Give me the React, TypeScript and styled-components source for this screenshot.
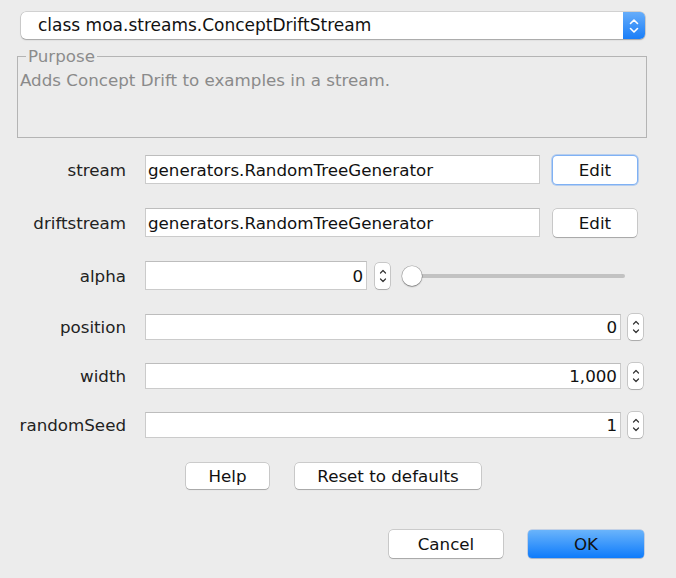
import React from "react";
import styled, { createGlobalStyle } from "styled-components";

const Global = createGlobalStyle`
  html, body { margin: 0; padding: 0; background: #ececec; }
  body { font-family: "DejaVu Sans", "Liberation Sans", sans-serif; }
  * { box-sizing: border-box; }
`;

const Page = styled.div`
  width: 676px;
  height: 578px;
  padding-top: 12px;
  display: flex;
  flex-direction: column;
  font-size: 16.7px;
  color: #1a1a1a;
`;

const Combo = styled.div`
  margin: 0 31px 0 21px;
  height: 27px;
  display: flex;
  background: #fff;
  border-radius: 5px;
  box-shadow: 0 0 0 0.5px rgba(0, 0, 0, 0.22), 0 1px 1.5px rgba(0, 0, 0, 0.22);
`;

const ComboText = styled.div`
  flex: 1;
  padding-left: 17px;
  font-size: 17px;
  line-height: 27px;
  color: #111;
`;

const ComboArrows = styled.div`
  width: 22px;
  border-radius: 0 5px 5px 0;
  background: linear-gradient(#66adfa, #1a7ef8);
  display: flex;
  align-items: center;
  justify-content: center;
`;

const Panel = styled.fieldset`
  margin: 8px 29px 0 17px;
  padding: 0 0 0 2px;
  border: 1px solid #b4b4b4;
  min-inline-size: 0;
`;

const Legend = styled.legend`
  margin-left: 6px;
  padding: 0 2px;
  line-height: 19px;
  color: #8c8c8c;
`;

const Description = styled.div`
  margin-top: 5px;
  height: 66px;
  line-height: 19px;
  color: #8a8a8a;
`;

const Form = styled.div`
  margin-top: 17px;
  display: flex;
  flex-direction: column;
`;

const Row = styled.div<{ $h: number; $mt: number }>`
  display: flex;
  align-items: center;
  height: ${(p) => p.$h}px;
  margin-top: ${(p) => p.$mt}px;
`;

const Label = styled.div`
  width: 126px;
  margin-right: 19px;
  text-align: right;
  color: #222;
`;

const Field = styled.div<{ $w: number; $num?: boolean }>`
  width: ${(p) => p.$w}px;
  height: 100%;
  background: #fff;
  border: 1px solid #cbcbcb;
  border-top-color: #bdbdbd;
  display: flex;
  align-items: center;
  justify-content: ${(p) => (p.$num ? "flex-end" : "flex-start")};
  padding: 0 3px 0 2px;
  color: #111;
  white-space: nowrap;
`;

const Button = styled.button<{ $w: number; $h?: number; $focus?: boolean; $primary?: boolean }>`
  width: ${(p) => p.$w}px;
  height: ${(p) => p.$h ?? 26}px;
  font-family: inherit;
  font-size: 16.7px;
  color: #111;
  padding: 0;
  border: none;
  border-radius: 4px;
  background: ${(p) => (p.$primary ? "linear-gradient(#6ab4fb, #0e7bfb)" : "#fff")};
  box-shadow: ${(p) =>
    p.$focus
      ? "0 0 0 1px #7fb1f4, 0 0 0 2px rgba(130,175,240,0.5)"
      : p.$primary
      ? "0 0 0 0.5px rgba(0,80,200,0.35), 0 1px 1px rgba(0,0,0,0.15)"
      : "0 0 0 0.5px rgba(0,0,0,0.28), 0 1px 1px rgba(0,0,0,0.18)"};
`;

const EditButton = styled(Button)`
  margin-left: 13px;
`;

const Spinner = styled.div<{ $ml: number }>`
  margin-left: ${(p) => p.$ml}px;
  width: 15px;
  height: 26px;
  background: #fff;
  border-radius: 4px;
  box-shadow: 0 0 0 0.5px rgba(0, 0, 0, 0.3), 0 1px 1px rgba(0, 0, 0, 0.15);
  display: flex;
  align-items: center;
  justify-content: center;
`;

const Slider = styled.div`
  margin-left: 12px;
  width: 223px;
  height: 22px;
  position: relative;
  display: flex;
  align-items: center;
`;

const Track = styled.div`
  flex: 1;
  height: 4px;
  margin-left: 10px;
  border-radius: 2px;
  background: #c2c2c2;
`;

const Thumb = styled.div`
  position: absolute;
  left: 0;
  top: 1px;
  width: 20px;
  height: 20px;
  border-radius: 50%;
  background: #fff;
  box-shadow: 0 0 0 0.5px rgba(0, 0, 0, 0.3), 0 1px 1.5px rgba(0, 0, 0, 0.3);
`;

const HelpBar = styled.div`
  margin-top: 25px;
  padding: 0 26px 0 17px;
  display: flex;
  justify-content: center;
  gap: 26px;
`;

const DialogBar = styled.div`
  margin-top: 41px;
  padding-right: 32px;
  display: flex;
  justify-content: flex-end;
  gap: 25px;
`;

const ComboChevrons = () => (
  <svg width="10" height="16" viewBox="0 0 10 16">
    <path d="M1.5 5.5 L5 2 L8.5 5.5" fill="none" stroke="#fff" strokeWidth="1.6" strokeLinecap="round" strokeLinejoin="round" />
    <path d="M1.5 10.5 L5 14 L8.5 10.5" fill="none" stroke="#fff" strokeWidth="1.6" strokeLinecap="round" strokeLinejoin="round" />
  </svg>
);

const SpinChevrons = () => (
  <svg width="8" height="16" viewBox="0 0 8 16">
    <path d="M1.5 5 L4 2.5 L6.5 5" fill="none" stroke="#333" strokeWidth="1.2" strokeLinecap="round" strokeLinejoin="round" />
    <path d="M1.5 11 L4 13.5 L6.5 11" fill="none" stroke="#333" strokeWidth="1.2" strokeLinecap="round" strokeLinejoin="round" />
  </svg>
);

export default function App() {
  return (
    <>
      <Global />
      <Page>
        <Combo>
          <ComboText>class moa.streams.ConceptDriftStream</ComboText>
          <ComboArrows>
            <ComboChevrons />
          </ComboArrows>
        </Combo>
        <Panel>
          <Legend>Purpose</Legend>
          <Description>Adds Concept Drift to examples in a stream.</Description>
        </Panel>
        <Form>
          <Row $h={29} $mt={0}>
            <Label>stream</Label>
            <Field $w={395}>generators.RandomTreeGenerator</Field>
            <EditButton $w={84} $h={28} $focus>Edit</EditButton>
          </Row>
          <Row $h={29} $mt={24}>
            <Label>driftstream</Label>
            <Field $w={395}>generators.RandomTreeGenerator</Field>
            <EditButton $w={84} $h={28}>Edit</EditButton>
          </Row>
          <Row $h={29} $mt={24}>
            <Label>alpha</Label>
            <Field $w={222} $num>0</Field>
            <Spinner $ml={8}>
              <SpinChevrons />
            </Spinner>
            <Slider>
              <Track />
              <Thumb />
            </Slider>
          </Row>
          <Row $h={26} $mt={24}>
            <Label>position</Label>
            <Field $w={476} $num>0</Field>
            <Spinner $ml={7}>
              <SpinChevrons />
            </Spinner>
          </Row>
          <Row $h={26} $mt={23}>
            <Label>width</Label>
            <Field $w={476} $num>1,000</Field>
            <Spinner $ml={7}>
              <SpinChevrons />
            </Spinner>
          </Row>
          <Row $h={26} $mt={23}>
            <Label>randomSeed</Label>
            <Field $w={476} $num>1</Field>
            <Spinner $ml={7}>
              <SpinChevrons />
            </Spinner>
          </Row>
        </Form>
        <HelpBar>
          <Button $w={83}>Help</Button>
          <Button $w={186}>Reset to defaults</Button>
        </HelpBar>
        <DialogBar>
          <Button $w={114} $h={28}>Cancel</Button>
          <Button $w={116} $h={28} $primary>OK</Button>
        </DialogBar>
      </Page>
    </>
  );
}
